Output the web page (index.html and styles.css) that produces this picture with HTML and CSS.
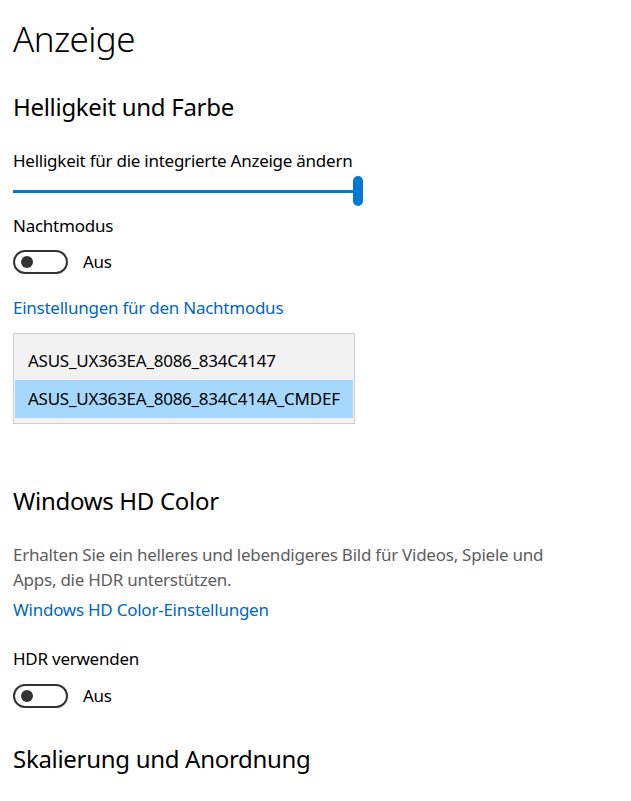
FILE: index.html
```html
<!DOCTYPE html>
<html lang="de">
<head>
<meta charset="utf-8">
<title>Anzeige</title>
<link rel="stylesheet" href="styles.css">
</head>
<body>
<main class="page">
  <h1 class="title">Anzeige</h1>

  <h2 class="subtitle first">Helligkeit und Farbe</h2>
  <div class="label brightness-label">Helligkeit für die integrierte Anzeige ändern</div>
  <div class="slider">
    <div class="track"></div>
    <div class="thumb"></div>
  </div>

  <div class="label night-label">Nachtmodus</div>
  <div class="toggle-row night-toggle">
    <span class="toggle"><span class="knob"></span></span>
    <span class="toggle-text">Aus</span>
  </div>

  <a class="link night-link" href="#">Einstellungen für den Nachtmodus</a>

  <div class="listbox">
    <div class="item">ASUS_UX363EA_8086_834C4147</div>
    <div class="item selected">ASUS_UX363EA_8086_834C414A_CMDEF</div>
  </div>

  <h2 class="subtitle hd">Windows HD Color</h2>
  <p class="desc">Erhalten Sie ein helleres und lebendigeres Bild für Videos, Spiele und Apps, die HDR unterstützen.</p>
  <a class="link hd-link" href="#">Windows HD Color-Einstellungen</a>

  <div class="label hdr-label">HDR verwenden</div>
  <div class="toggle-row hdr-toggle">
    <span class="toggle"><span class="knob"></span></span>
    <span class="toggle-text">Aus</span>
  </div>

  <h2 class="subtitle scale">Skalierung und Anordnung</h2>
</main>
</body>
</html>
```

FILE: styles.css
```css
html, body {
  margin: 0;
  padding: 0;
  background: #ffffff;
}

body {
  font-family: "Noto Sans", "Open Sans", "Liberation Sans", sans-serif;
  color: #000000;
}

.page {
  padding: 15px 13px 0 13px;
  display: flex;
  flex-direction: column;
  align-items: flex-start;
}

.title {
  margin: 0;
  font-size: 35px;
  font-weight: 300;
  letter-spacing: -0.6px;
  line-height: 48px;
  height: 48px;
}

.subtitle {
  margin: 0;
  font-size: 24px;
  font-weight: 400;
  letter-spacing: -0.3px;
  line-height: 32px;
  height: 32px;
}

.subtitle.first { margin-top: 28px; }
.subtitle.hd { margin-top: 61px; }
.subtitle.scale { margin-top: 35px; }

.label {
  font-size: 17px;
  letter-spacing: -0.25px;
  line-height: 24px;
  height: 24px;
}

.brightness-label { margin-top: 26px; }
.night-label { margin-top: 8px; }
.hdr-label { margin-top: 25px; }

.slider {
  position: relative;
  width: 350px;
  height: 30px;
  margin-top: 3px;
}

.track {
  position: absolute;
  left: 0;
  right: 8px;
  top: 14px;
  height: 3px;
  background: #0078d7;
}

.thumb {
  position: absolute;
  left: 340px;
  top: 0;
  width: 10px;
  height: 30px;
  border-radius: 5px;
  background: #0078d7;
}

.toggle-row {
  display: flex;
  align-items: center;
  gap: 15px;
  height: 24px;
}

.night-toggle { margin-top: 12px; }
.hdr-toggle { margin-top: 13px; }

.toggle {
  box-sizing: border-box;
  width: 55px;
  height: 24px;
  border: 2px solid #333333;
  border-radius: 12px;
  display: flex;
  align-items: center;
  padding-left: 6px;
}

.knob {
  width: 12px;
  height: 12px;
  border-radius: 50%;
  background: #333333;
}

.toggle-text {
  font-size: 17px;
  letter-spacing: -0.25px;
  line-height: 24px;
}

.link {
  font-size: 17px;
  letter-spacing: -0.25px;
  line-height: 24px;
  height: 24px;
  color: #0067c0;
  text-decoration: none;
}

.night-link { margin-top: 22px; }
.hd-link { margin-top: 6px; }

.listbox {
  box-sizing: border-box;
  margin-top: 13px;
  width: 342px;
  height: 91px;
  border: 1px solid #cccccc;
  background: #f2f2f2;
  padding: 8px 1px 5px 1px;
  display: flex;
  flex-direction: column;
}

.item {
  height: 38px;
  line-height: 38px;
  padding-left: 13px;
  font-size: 17px;
  letter-spacing: -0.25px;
  color: #000000;
}

.item.selected {
  background: #a6d8fe;
}

.desc {
  margin: 25px 0 0 0;
  width: 560px;
  font-size: 17px;
  letter-spacing: -0.25px;
  line-height: 25px;
  color: #5d5d5d;
}
```
